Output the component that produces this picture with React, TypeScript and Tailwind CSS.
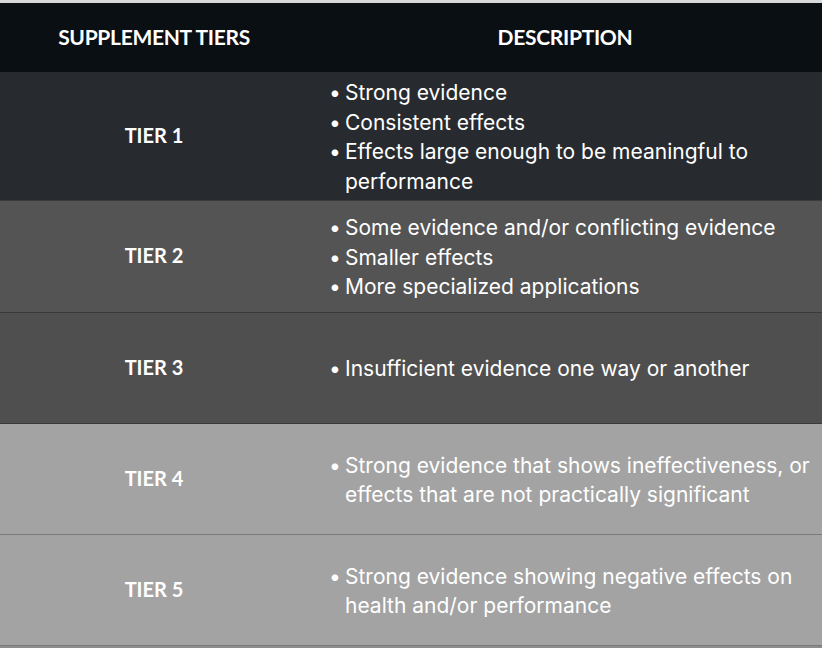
const rows = [
  {
    tier: "TIER 1",
    bg: "bg-[#272b30]",
    h: "min-h-[128px]",
    items: [
      "Strong evidence",
      "Consistent effects",
      "Effects large enough to be meaningful to performance",
    ],
  },
  {
    tier: "TIER 2",
    bg: "bg-[#545454]",
    h: "min-h-[112px]",
    items: [
      "Some evidence and/or conflicting evidence",
      "Smaller effects",
      "More specialized applications",
    ],
  },
  {
    tier: "TIER 3",
    bg: "bg-[#4f4f4f]",
    h: "min-h-[111px]",
    items: ["Insufficient evidence one way or another"],
  },
  {
    tier: "TIER 4",
    bg: "bg-[#a3a3a3]",
    h: "min-h-[111px]",
    items: ["Strong evidence that shows ineffectiveness, or effects that are not practically significant"],
  },
  {
    tier: "TIER 5",
    bg: "bg-[#a3a3a3]",
    h: "min-h-[111px]",
    items: ["Strong evidence showing negative effects on health and/or performance"],
  },
];

export default function App() {
  return (
    <div className="w-[822px] h-[648px] bg-[#8c8c8c] overflow-hidden">
      <div className="border-t-[3px] border-[#d9d9d9]">
        {/* Header */}
        <div className="flex h-[69px] bg-[#0a0f14] text-white font-['Lato',sans-serif] font-bold text-[21px] tracking-[-0.3px]">
          <div className="w-[308px] flex items-center justify-center pb-[2px]">SUPPLEMENT TIERS</div>
          <div className="flex-1 flex items-center justify-center pb-[2px]">DESCRIPTION</div>
        </div>

        {/* Rows */}
        {rows.map((row, i) => (
          <div
            key={row.tier}
            className={`flex ${row.bg} ${row.h} ${i > 0 ? "border-t border-[#3a3a3a]" : ""} ${i === 4 ? "border-[#7a7a7a]" : ""}`}
          >
            <div className="w-[308px] flex items-center justify-center pb-[3px] text-white font-['Lato',sans-serif] font-bold text-[20px]">
              {row.tier}
            </div>
            <ul className="flex-1 flex flex-col justify-center pt-[6px] pb-[4px] pl-[21px] pr-2 text-white font-['Inter',sans-serif] text-[21px] leading-[29.5px]">
              {row.items.map((item) => (
                <li key={item} className="flex">
                  <span className="w-[16px] shrink-0">•</span>
                  <span>{item}</span>
                </li>
              ))}
            </ul>
          </div>
        ))}
        <div className="h-[1px] bg-[#7a7a7a]" />
      </div>
    </div>
  );
}
